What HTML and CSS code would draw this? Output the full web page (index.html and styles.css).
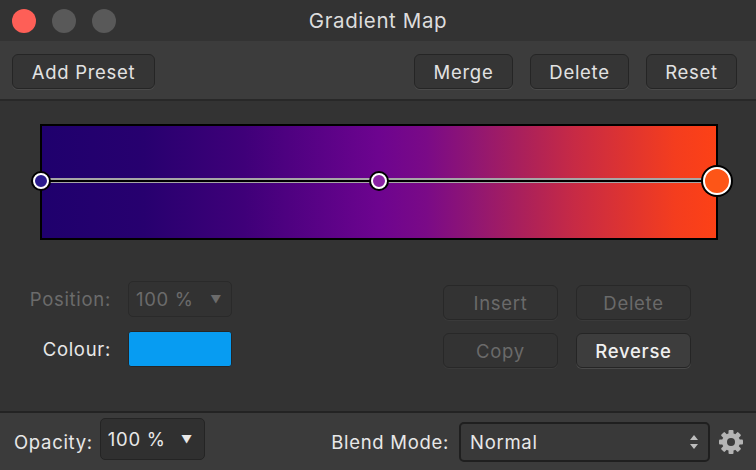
FILE: index.html
```html
<!DOCTYPE html>
<html lang="en">
<head>
    <meta charset="UTF-8">
    <title>Gradient Map</title>
    <link rel="stylesheet" href="styles.css">
</head>
<body>
    <div class="window">
        <div class="titlebar">
            <div class="lights">
                <span class="light red"></span>
                <span class="light"></span>
                <span class="light"></span>
            </div>
            <div class="title">Gradient Map</div>
            <div></div>
        </div>

        <div class="toolbar">
            <button class="btn add">Add Preset</button>
            <div class="spacer"></div>
            <button class="btn merge">Merge</button>
            <button class="btn">Delete</button>
            <button class="btn reset">Reset</button>
        </div>

        <div class="main">
            <div class="ramp">
                <div class="track"></div>
                <span class="stop s-left"></span>
                <span class="stop s-mid"></span>
                <span class="stop s-right"></span>
            </div>

            <div class="controls">
                <div class="fields">
                    <label class="lbl dim">Position:</label>
                    <div class="drop disabled">100 %<span class="arrow">&#9660;</span></div>
                    <label class="lbl">Colour:</label>
                    <div class="swatch"></div>
                </div>
                <div class="actions">
                    <button class="btn small" disabled>Insert</button>
                    <button class="btn small" disabled>Delete</button>
                    <button class="btn small" disabled>Copy</button>
                    <button class="btn small on">Reverse</button>
                </div>
            </div>
        </div>

        <div class="footer">
            <label class="lbl">Opacity:</label>
            <div class="drop opacity">100 %<span class="arrow">&#9660;</span></div>
            <div class="spacer"></div>
            <label class="lbl">Blend Mode:</label>
            <div class="select">Normal
                <svg class="updown" width="10" height="18" viewBox="0 0 10 18">
                    <path d="M5 2 L9 7 H1 Z M5 16 L9 11 H1 Z" fill="#bdbdbd"/>
                </svg>
            </div>
            <svg class="gear" width="26" height="26" viewBox="0 0 26 26">
                <g fill="#b4b4b4">
                    <rect x="10.5" y="1" width="5" height="24" rx="1"/>
                    <rect x="10.5" y="1" width="5" height="24" rx="1" transform="rotate(45 13 13)"/>
                    <rect x="10.5" y="1" width="5" height="24" rx="1" transform="rotate(90 13 13)"/>
                    <rect x="10.5" y="1" width="5" height="24" rx="1" transform="rotate(135 13 13)"/>
                    <circle cx="13" cy="13" r="9"/>
                </g>
                <circle cx="13" cy="13" r="4" fill="#3b3b3b"/>
            </svg>
        </div>
    </div>
</body>
</html>
```

FILE: styles.css
```css
body {
    margin: 0;
    background-color: #333333;
    font-family: Inter, "Noto Sans", sans-serif;
    color: #e6e6e6;
}
.window {
    width: 756px;
    height: 470px;
    display: flex;
    flex-direction: column;
    overflow: hidden;
}
.titlebar {
    height: 41px;
    flex-shrink: 0;
    display: grid;
    grid-template-columns: 1fr auto 1fr;
    align-items: center;
    background-color: #333333;
}
.lights {
    display: flex;
    gap: 16px;
    padding-left: 12px;
}
.light {
    width: 24px;
    height: 24px;
    border-radius: 50%;
    background-color: #595959;
}
.light.red {
    background-color: #fe5f57;
}
.title {
    font-size: 20.5px;
    color: #dddddd;
    letter-spacing: 0.6px;
}
.toolbar {
    height: 45px;
    flex-shrink: 0;
    display: flex;
    align-items: flex-start;
    padding: 13px 19px 0 12px;
    gap: 17px;
    background-color: #3c3c3c;
    border-bottom: 2px solid #282828;
}
.spacer {
    flex: 1;
}
.btn {
    height: 35px;
    width: 99px;
    font-family: inherit;
    font-size: 18.5px;
    letter-spacing: 0.7px;
    color: #e2e2e2;
    background-color: #353535;
    border: 1.5px solid #252525;
    border-radius: 6px;
    box-shadow: 0 1px 0 #4a4a4a;
    padding: 0;
}
.btn.add {
    width: 143px;
}
.btn.reset {
    width: 91px;
}
.main {
    flex: 1;
    padding: 23px 38px 0 40px;
    border-bottom: 2px solid #232323;
}
.ramp {
    position: relative;
    height: 116px;
    box-sizing: border-box;
    border: 2px solid #000000;
    background: linear-gradient(to right, #1f006d 0%, #27006f 15%, #3f0079 30%, #5b0287 42%, #6d048f 50%, #7a0a87 57%, #901673 64%, #ad2159 72%, #c72a45 79%, #df3430 87%, #f43d1e 94%, #fd4116 100%);
}
.track {
    position: absolute;
    left: 0;
    right: 0;
    top: 52px;
    height: 2px;
    border-top: 2px solid rgba(255, 255, 255, 0.65);
    border-bottom: 1px solid rgba(255, 255, 255, 0.65);
    background-color: #000000;
}
.stop {
    position: absolute;
    top: 55px;
    width: 12px;
    height: 12px;
    border-radius: 50%;
    border: 2px solid #ffffff;
    box-shadow: 0 0 0 2px #000000;
    transform: translate(-50%, -50%);
}
.s-left {
    left: -1px;
    background-color: #2b1b8d;
}
.s-mid {
    left: 337px;
    background-color: #8a22a5;
}
.s-right {
    left: 675px;
    width: 24px;
    height: 24px;
    background-color: #fd5517;
}
.controls {
    display: flex;
    justify-content: space-between;
    margin-top: 41px;
    margin-left: -40px;
}
.fields {
    display: grid;
    grid-template-columns: 111px 104px;
    grid-template-rows: 36px 36px;
    column-gap: 17px;
    row-gap: 14px;
    align-items: center;
}
.lbl {
    font-size: 18.5px;
    letter-spacing: 0.7px;
    color: #e8e8e8;
    text-align: right;
    white-space: nowrap;
}
.lbl.dim {
    color: #6b6b6b;
}
.drop {
    height: 36px;
    box-sizing: border-box;
    display: flex;
    align-items: center;
    justify-content: space-between;
    padding: 0 9px 0 7px;
    font-size: 18.5px;
    letter-spacing: 0.7px;
    color: #e8e8e8;
    background-color: #303030;
    border: 1.5px solid #242424;
    border-radius: 5px;
}
.drop.disabled {
    color: #6b6b6b;
    background-color: #323232;
    border-color: #2a2a2a;
}
.arrow {
    font-size: 11px;
}
.swatch {
    height: 36px;
    background-color: #079cf2;
    border: 1.5px solid #262626;
    border-radius: 3px;
    box-sizing: border-box;
}
.actions {
    display: grid;
    grid-template-columns: 115px 115px;
    column-gap: 18px;
    row-gap: 13px;
    margin-top: 4px;
    margin-right: 27px;
}
.btn.small {
    width: 115px;
}
.btn.small:disabled {
    color: #6a6a6a;
    background-color: #333333;
    border-color: #282828;
    box-shadow: 0 1px 0 #3a3a3a;
}
.btn.on {
    background-color: #3d3d3d;
    color: #f0f0f0;
    font-weight: 500;
}
.footer {
    height: 57px;
    flex-shrink: 0;
    display: flex;
    align-items: center;
    padding: 0 12px 0 14px;
    background-color: #3b3b3b;
}
.footer .lbl {
    margin-right: 7px;
}
.drop.opacity {
    width: 105px;
    height: 42px;
    margin-top: -5px;
    padding-right: 11px;
}
.select {
    width: 251px;
    height: 40px;
    box-sizing: border-box;
    display: flex;
    align-items: center;
    justify-content: space-between;
    padding: 0 9px 0 9px;
    font-size: 18.5px;
    letter-spacing: 0.7px;
    color: #e8e8e8;
    border: 2px solid #1f1f1f;
    border-radius: 5px;
    background-color: #393939;
    margin-left: 3px;
}
.gear {
    margin-left: 8px;
}
```
